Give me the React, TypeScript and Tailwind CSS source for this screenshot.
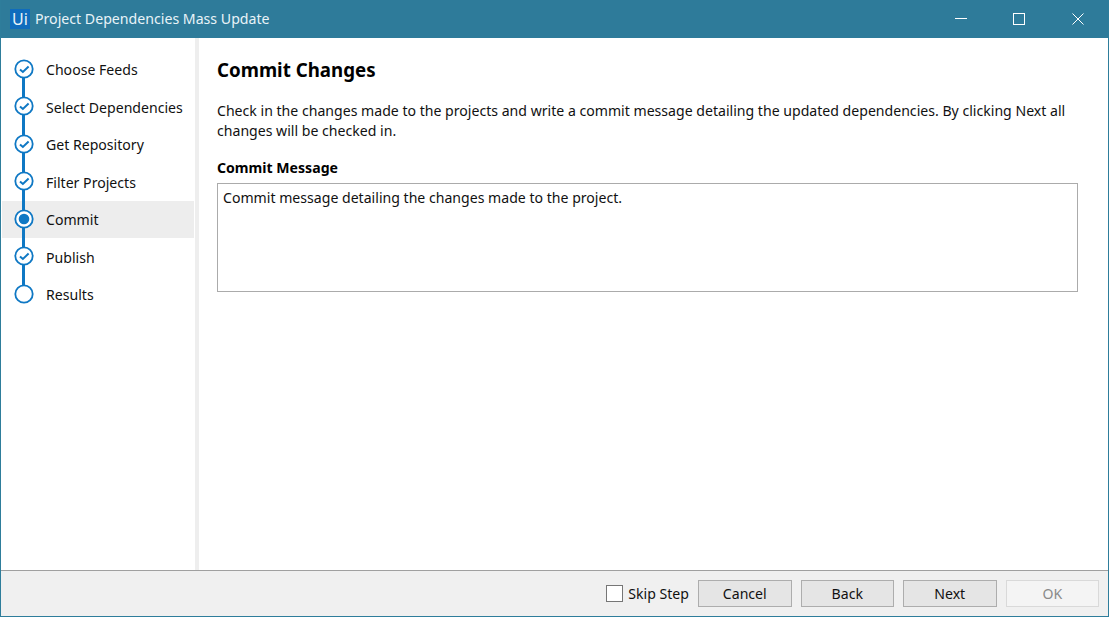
import React from "react";

const font = { fontFamily: '"Noto Sans", "Open Sans", sans-serif' };

type Step = { label: string; state: "done" | "current" | "todo" };
const steps: Step[] = [
  { label: "Choose Feeds", state: "done" },
  { label: "Select Dependencies", state: "done" },
  { label: "Get Repository", state: "done" },
  { label: "Filter Projects", state: "done" },
  { label: "Commit", state: "current" },
  { label: "Publish", state: "done" },
  { label: "Results", state: "todo" },
];

function StepIcon({ state }: { state: Step["state"] }) {
  return (
    <svg width="20" height="20" viewBox="0 0 20 20" className="relative -mt-[2px] shrink-0">
      <circle cx="10" cy="10" r="8.7" fill="#fff" stroke="#0f78c4" strokeWidth="1.8" />
      {state === "done" && (
        <path d="M6 10.4 L8.9 13 L14.6 7.6" fill="none" stroke="#0f78c4" strokeWidth="2" />
      )}
      {state === "current" && <circle cx="10" cy="10" r="5.3" fill="#0f78c4" />}
    </svg>
  );
}

function FooterButton({ children, disabled }: { children: React.ReactNode; disabled?: boolean }) {
  return (
    <button
      className={
        disabled
          ? "h-[27px] w-[93.5px] border border-[#d9d9d9] bg-[#f4f4f4] text-[#8a8a8a]"
          : "h-[27px] w-[93.5px] border border-[#adadad] bg-[#e5e5e5] text-[#111]"
      }
    >
      {children}
    </button>
  );
}

export default function App() {
  return (
    <div
      className="flex h-[617px] w-[1109px] flex-col overflow-hidden border border-t-0 border-[#2e7d9b] bg-white text-[14.1px] leading-[20px] text-[#111]"
      style={font}
    >
      <div className="flex h-[38px] shrink-0 items-center bg-[#2e7b9a] text-[#e8f3f8]">
        <div className="ml-[9px] flex h-[20px] w-[20px] items-center justify-center bg-[#0f6cbd] text-[16px] text-[#e8f3f8]">
          Ui
        </div>
        <span className="ml-[5px] text-[14.15px]">Project Dependencies Mass Update</span>
        <div className="ml-auto flex items-center">
          <svg width="12" height="12" viewBox="0 0 12 12" className="mr-[46px]">
            <path d="M0 5.5 H12" stroke="#fff" strokeWidth="1" />
          </svg>
          <svg width="12" height="12" viewBox="0 0 12 12" className="mr-[47px]">
            <rect x="0.5" y="0.5" width="11" height="11" fill="none" stroke="#fff" strokeWidth="1" />
          </svg>
          <svg width="12" height="12" viewBox="0 0 12 12" className="mr-[24px]">
            <path d="M0.5 0.5 L11.5 11.5 M11.5 0.5 L0.5 11.5" stroke="#fff" strokeWidth="1" />
          </svg>
        </div>
      </div>

      <div className="flex min-h-0 flex-1">
        <div className="w-[194px] shrink-0 pt-[12.9px]">
          {steps.map((s, i) => (
            <div
              key={s.label}
              className={`relative ml-px mr-px flex h-[37.5px] items-center pl-[12px] ${
                s.state === "current" ? "bg-[#ededed]" : ""
              }`}
            >
              {i < steps.length - 1 && (
                <span className="absolute left-[20px] top-[18px] h-[38px] w-[3px] bg-[#0f78c4]" />
              )}
              {i > 0 && (
                <span className="absolute left-[20px] top-0 h-[18px] w-[3px] bg-[#0f78c4]" />
              )}
              <StepIcon state={s.state} />
              <span className="ml-[12px] whitespace-nowrap pt-[1.2px]">{s.label}</span>
            </div>
          ))}
        </div>
        <div className="w-[4px] shrink-0 bg-[#eeeeee]" />
        <div className="min-w-0 flex-1 pl-[18px] pr-[30px] pt-[20px]">
          <h1 className="text-[18.7px] font-bold leading-[24px] text-black">Commit Changes</h1>
          <p className="mt-[19px] leading-[20px]">
            Check in the changes made to the projects and write a commit message detailing the updated dependencies. By clicking Next all changes will be checked in.
          </p>
          <div className="mt-[17px] font-bold leading-[20px] text-black">Commit Message</div>
          <div className="mt-[5px] h-[109px] border border-[#ababab] px-[5px] py-[4px]">
            Commit message detailing the changes made to the project.
          </div>
        </div>
      </div>

      <div className="flex h-[46px] shrink-0 items-center justify-end gap-[9px] border-t border-[#a0a0a0] bg-[#f0f0f0] pr-[9px]">
        <label className="flex items-center gap-[5px]">
          <span className="h-[17px] w-[17px] border border-[#767676] bg-white" />
          <span>Skip Step</span>
        </label>
        <FooterButton>Cancel</FooterButton>
        <FooterButton>Back</FooterButton>
        <FooterButton>Next</FooterButton>
        <FooterButton disabled>OK</FooterButton>
      </div>
    </div>
  );
}
